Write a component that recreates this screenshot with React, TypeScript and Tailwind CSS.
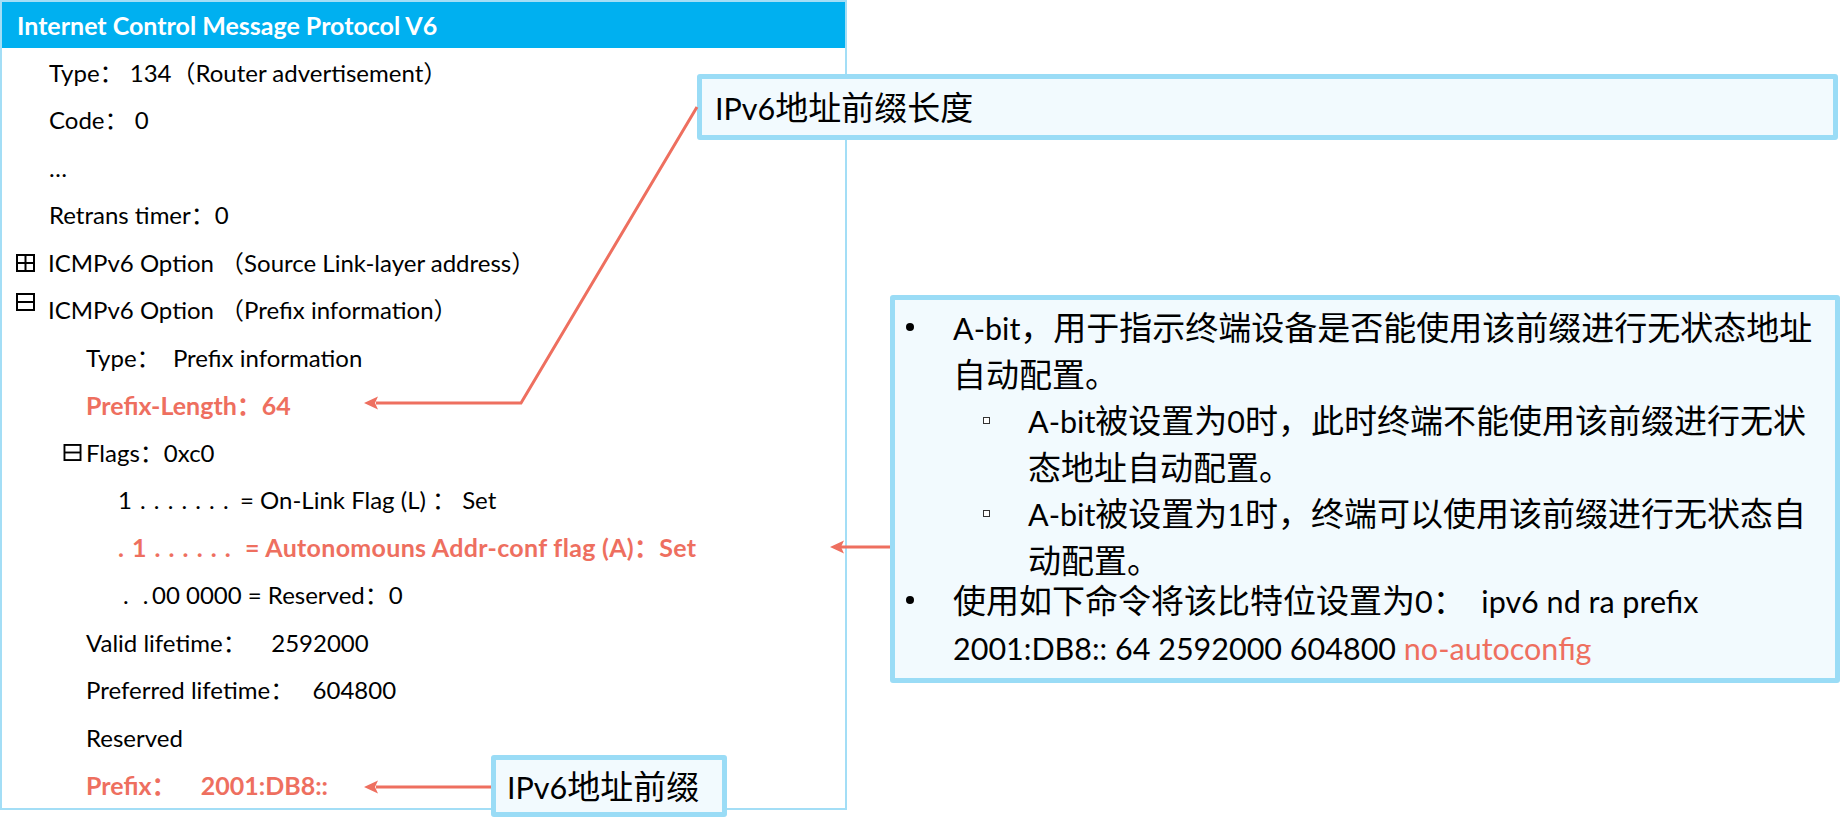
// 树形节点图标：方框加号 / 方框减号
function TreeIcon({ open, className }: { open?: boolean; className?: string }) {
  return (
    <svg viewBox="0 0 19 18" className={className} fill="none" stroke="#000" strokeWidth="2">
      <rect x="1" y="1" width="17" height="16" />
      <line x1="1" y1="9" x2="18" y2="9" />
      {!open && <line x1="9.5" y1="1" x2="9.5" y2="17" />}
    </svg>
  )
}

function Row({ className = '', children }: { className?: string; children: React.ReactNode }) {
  return <div className={`h-[47.5px] flex items-center whitespace-pre ${className}`}>{children}</div>
}

// 西文字符略小一号，贴近原稿的字宽
function L({ children }: { children: React.ReactNode }) {
  return <span className="text-[30.5px] leading-none">{children}</span>
}

function Dot() {
  return (
    <div className="w-[58px] shrink-0 h-[46.5px] flex items-center pl-[11px]">
      <div className="w-[8px] h-[8px] rounded-full bg-black" />
    </div>
  )
}

function SubDot() {
  return (
    <div className="w-[133px] shrink-0 h-[46.5px] flex items-center pl-[88px]">
      <div className="w-[7px] h-[7px] border border-[#333] bg-white" />
    </div>
  )
}

export default function App() {
  return (
    <div className="relative w-[1844px] h-[827px] bg-white overflow-hidden">
      {/* 左侧报文结构 */}
      <div className="w-[847px] h-[810px] border-2 border-[#A3DEF6] flex flex-col font-[family-name:'Lato','Noto_Sans_CJK_SC',sans-serif] text-[24px] leading-none text-black">
        <div className="h-[46px] shrink-0 bg-[#00B0F0] flex items-center pl-[15px]">
          <span className="text-white font-bold text-[25px]">Internet Control Message Protocol V6</span>
        </div>
        <div className="pt-[1px]">
          <Row className="pl-[47px]"><span>Type： 134（Router advertisement）</span></Row>
          <Row className="pl-[47px]"><span>Code： 0</span></Row>
          <Row className="pl-[47px]"><span>…</span></Row>
          <Row className="pl-[47px]"><span>Retrans timer：0</span></Row>
          <Row className="pl-[14px]">
            <TreeIcon className="w-[19px] h-[18px] shrink-0" />
            <span className="ml-[13px]">ICMPv6 Option （Source Link-layer address）</span>
          </Row>
          <Row className="pl-[14px]">
            <TreeIcon open className="w-[19px] h-[18px] shrink-0 mb-[16px]" />
            <span className="ml-[13px]">ICMPv6 Option （Prefix information）</span>
          </Row>
          <Row className="pl-[84px]"><span>Type：  Prefix information</span></Row>
          <Row className="pl-[84px] text-[#EE6F5F] font-bold text-[25px]"><span>Prefix-Length：64</span></Row>
          <Row className="pl-[61px]">
            <TreeIcon open className="w-[19px] h-[17px] shrink-0" />
            <span className="ml-[4px]">Flags：0xc0</span>
          </Row>
          <Row className="pl-[116px]">
            <span className="inline-block w-[122px]"><span className="[word-spacing:2px]">1 . . . . . . .</span></span>
            <span>= On-Link Flag (L) ： Set</span>
          </Row>
          <Row className="pl-[116px] text-[#EE6F5F] font-bold text-[25px]">
            <span className="inline-block w-[127px]"><span className="[word-spacing:2px]">. 1 . . . . . .</span></span>
            <span className="tracking-[0.3px]">= Autonomouns Addr-conf flag (A)：Set</span>
          </Row>
          <Row className="pl-[121px]">
            <span className="inline-block w-[29px] tracking-[4px]">. .</span>
            <span>00 0000 = Reserved：0</span>
          </Row>
          <Row className="pl-[84px]"><span>Valid lifetime：    2592000</span></Row>
          <Row className="pl-[84px]"><span>Preferred lifetime：   604800</span></Row>
          <Row className="pl-[84px]"><span>Reserved</span></Row>
          <Row className="pl-[84px] text-[#EE6F5F] font-bold text-[25px]"><span>Prefix：    2001:DB8::</span></Row>
        </div>
      </div>

      {/* 标注框：前缀长度 */}
      <div className="absolute left-[697px] top-[74px] w-[1141px] h-[66px] border-[5px] border-[#9ADCF6] bg-[#F2FAFE] rounded-[3px] flex items-center pl-[13px] font-[family-name:'Lato','Noto_Sans_CJK_SC',sans-serif] text-[33px] leading-none text-black">
        <span><L>IPv6</L>地址前缀长度</span>
      </div>

      {/* 标注框：A-bit 说明 */}
      <div className="absolute left-[890px] top-[295px] w-[950px] h-[388px] border-[5px] border-[#9ADCF6] bg-[#F2FAFE] rounded-[3px] pt-[4px] font-[family-name:'Lato','Noto_Sans_CJK_SC',sans-serif] text-[33px] leading-[46.5px] text-black whitespace-pre">
        <div className="flex">
          <Dot />
          <div><L>A-bit</L>，用于指示终端设备是否能使用该前缀进行无状态地址<br />自动配置。</div>
        </div>
        <div className="flex">
          <SubDot />
          <div><L>A-bit</L>被设置为<L>0</L>时，此时终端不能使用该前缀进行无状<br />态地址自动配置。</div>
        </div>
        <div className="flex">
          <SubDot />
          <div><L>A-bit</L>被设置为<L>1</L>时，终端可以使用该前缀进行无状态自<br />动配置。</div>
        </div>
        <div className="flex -mt-[6px]">
          <Dot />
          <div>
            <div>使用如下命令将该比特位设置为<L>0</L>：<L>  ipv6 nd ra prefix</L></div>
            <div><L>2001:DB8:: 64 2592000 604800 <span className="text-[#EE6F5F]">no-autoconfig</span></L></div>
          </div>
        </div>
      </div>

      {/* 标注框：前缀 */}
      <div className="absolute left-[491px] top-[755px] w-[236px] h-[62px] border-[5px] border-[#9ADCF6] bg-[#F2FAFE] rounded-[3px] flex items-center pl-[11px] font-[family-name:'Lato','Noto_Sans_CJK_SC',sans-serif] text-[33px] leading-none text-black">
        <span><L>IPv6</L>地址前缀</span>
      </div>

      {/* 指示箭头 */}
      <svg className="absolute inset-0 pointer-events-none" width="1844" height="827" viewBox="0 0 1844 827">
        <g stroke="#EE6F5F" strokeWidth="3" fill="none">
          <polyline points="697,107 521,403 376,403" />
          <line x1="491" y1="787" x2="376" y2="787" />
          <line x1="890" y1="547" x2="841" y2="547" />
        </g>
        <g fill="#EE6F5F">
          <polygon points="364,403 378,396.5 375,403 378,409.5" />
          <polygon points="364,787 378,780.5 375,787 378,793.5" />
          <polygon points="830,547 844,540.5 841,547 844,553.5" />
        </g>
      </svg>
    </div>
  )
}
